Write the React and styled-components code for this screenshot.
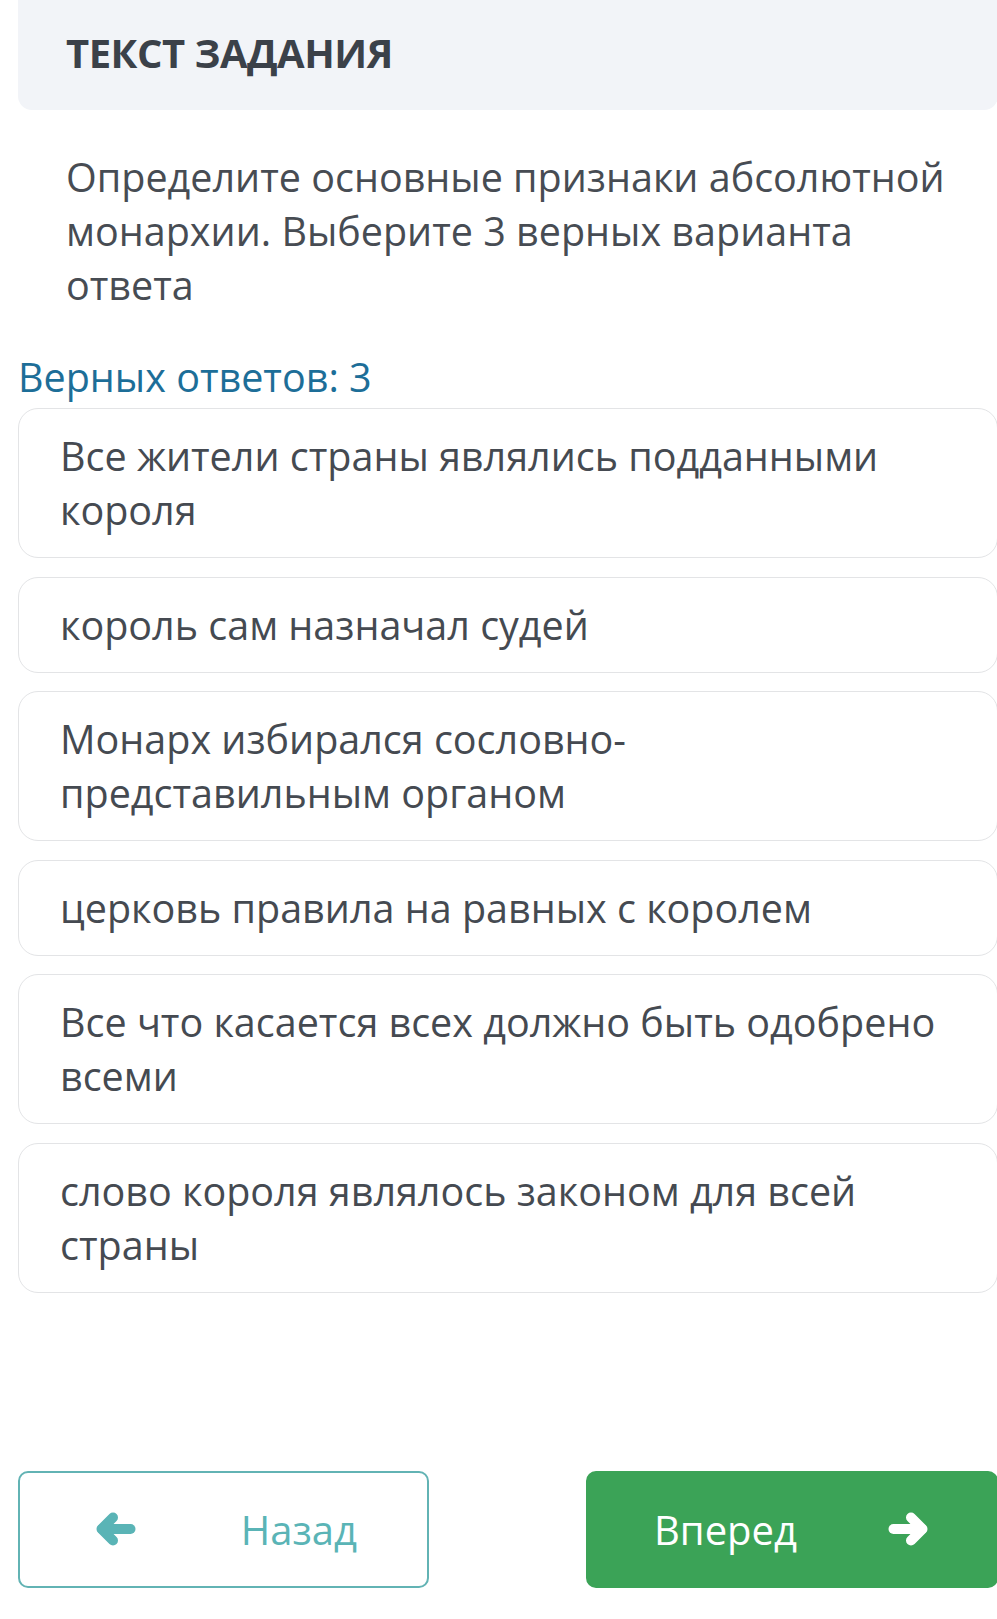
import styled, { createGlobalStyle } from "styled-components";

const GlobalStyle = createGlobalStyle`
  html, body {
    margin: 0;
    padding: 0;
    overflow: hidden;
    background: #ffffff;
  }

  body {
    font-family: "Open Sans", "Noto Sans", sans-serif;
    color: #454a51;
  }
`;

const PageStyles = styled.main`
  width: 980px;
  padding-left: 18px;
  box-sizing: content-box;
`;

const TaskHeader = styled.header`
  height: 110px;
  box-sizing: border-box;
  display: flex;
  align-items: center;
  padding: 0 0 6px 48px;
  background: #f2f4f8;
  border-radius: 0 0 14px 14px;

  h1 {
    margin: 0;
    font-size: 40px;
    font-weight: 700;
    color: #3b4149;
    letter-spacing: -0.5px;
  }
`;

const Question = styled.p`
  margin: 40px 0 0;
  padding: 0 40px 0 48px;
  font-size: 39.5px;
  line-height: 54px;
  color: #474c53;
`;

const AnswersCount = styled.div`
  margin-top: 38px;
  font-size: 39.5px;
  line-height: 54px;
  color: #1d6e98;
`;

const OptionList = styled.ul`
  list-style: none;
  margin: 4px 0 0;
  padding: 0;
  display: flex;
  flex-direction: column;
  gap: 18.5px;
`;

const OptionCard = styled.li`
  border: 1.5px solid #e3e4e6;
  border-radius: 20px;
  padding: 20px 40px 20px 41px;
  font-size: 39.5px;
  line-height: 54px;
  color: #454a51;
  background: #fff;
`;

const ButtonGroupStyles = styled.nav`
  margin-top: 178px;
  display: flex;
  justify-content: space-between;
`;

const NavButton = styled.button`
  width: ${(p) => (p.$primary ? "412px" : "411px")};
  height: 117px;
  box-sizing: border-box;
  display: flex;
  align-items: center;
  justify-content: space-between;
  padding: ${(p) => p.$pad};
  border-radius: 10px;
  border: 2px solid ${(p) => (p.$primary ? "#3ba357" : "#62b3b4")};
  background: ${(p) => (p.$primary ? "#3ba357" : "#ffffff")};
  color: ${(p) => (p.$primary ? "#ffffff" : "#5ab4b6")};
  font-family: "Open Sans", "Noto Sans", sans-serif;
  font-size: 40px;
  cursor: pointer;
`;

// chunky arrow: thick chevron head + short shaft, rounded ends
function Arrow({ dir = "left" }) {
  return (
    <svg
      width="40"
      height="34"
      viewBox="0 0 40 34"
      style={dir === "right" ? { transform: "scaleX(-1)" } : undefined}
    >
      <g
        fill="none"
        stroke="currentColor"
        strokeWidth="10"
        strokeLinecap="round"
        strokeLinejoin="round"
      >
        <polyline points="17,5.5 5.5,17 17,28.5" />
        <line x1="6" y1="17" x2="34.5" y2="17" />
      </g>
    </svg>
  );
}

const options = [
  "Все жители страны являлись подданными короля",
  "король сам назначал судей",
  "Монарх избирался сословно-представильным органом",
  "церковь правила на равных с королем",
  "Все что касается всех должно быть одобрено всеми",
  "слово короля являлось законом для всей страны",
];

export default function App() {
  return (
    <>
      <GlobalStyle />
      <PageStyles>
        <TaskHeader>
          <h1>ТЕКСТ ЗАДАНИЯ</h1>
        </TaskHeader>
        <Question>
          Определите основные признаки абсолютной монархии. Выберите 3 верных
          варианта ответа
        </Question>
        <AnswersCount>Верных ответов: 3</AnswersCount>
        <OptionList>
          {options.map((text) => (
            <OptionCard key={text}>{text}</OptionCard>
          ))}
        </OptionList>
        <ButtonGroupStyles>
          <NavButton $pad="0 70px 0 76px">
            <Arrow dir="left" />
            <span>Назад</span>
          </NavButton>
          <NavButton $primary $pad="0 68px 0 66px">
            <span>Вперед</span>
            <Arrow dir="right" />
          </NavButton>
        </ButtonGroupStyles>
      </PageStyles>
    </>
  );
}
